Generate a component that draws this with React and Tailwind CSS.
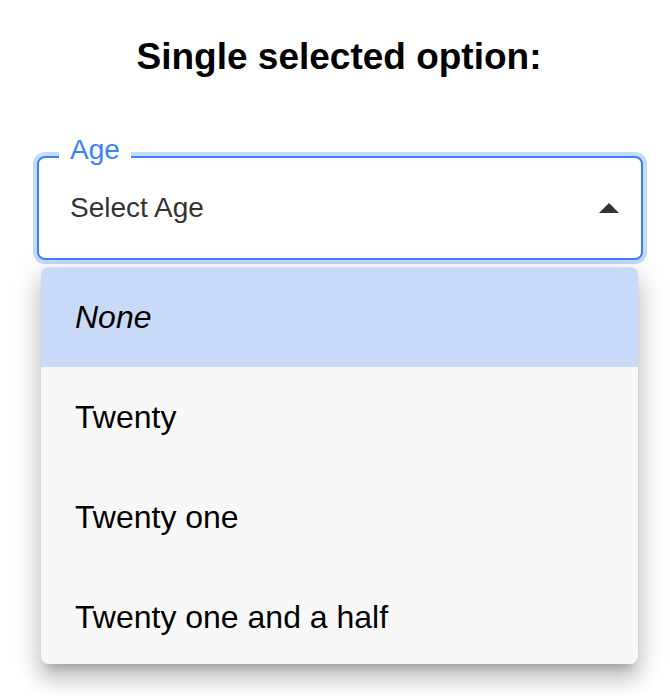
import React from 'react';

const OPTIONS = [
  { label: 'None', italic: true, selected: true },
  { label: 'Twenty' },
  { label: 'Twenty one' },
  { label: 'Twenty one and a half' },
];

const Option = ({ label, italic, selected }) => (
  <li
    className={`flex items-center shrink-0 h-[100px] pl-[34px] text-[32px] text-black ${
      selected ? 'bg-[#c8daf8]' : ''
    } ${italic ? 'italic' : ''}`}
  >
    {label}
  </li>
);

export default function App() {
  return (
    <div className="min-h-[696px] bg-white font-['Liberation_Sans',Arial,sans-serif] pt-[35px]">
      <h3 className="text-center text-[37px] leading-[43px] font-bold text-black pl-[8px]">
        Single selected option:
      </h3>

      <div className="ml-[33px] mt-[74px] w-[614px] rounded-[12px] p-[4px] bg-[#c6dafc]">
        <div className="relative flex items-center h-[104px] rounded-[8px] border-2 border-[#3b82f6] bg-white pl-[31px] pr-[22px]">
          <span className="absolute left-[20px] top-[-22px] px-[11px] bg-white text-[28px] leading-[28px] text-[#3b82f6]">
            Age
          </span>
          <span className="flex-1 text-[28px] text-[#333333]">Select Age</span>
          {/* caret up */}
          <svg width="20" height="10" viewBox="0 0 20 10" className="shrink-0">
            <path d="M0 10 L10 0 L20 10 Z" fill="#333333" />
          </svg>
        </div>
      </div>

      <ul className="flex flex-col ml-[41px] mt-[3px] w-[597px] h-[397px] overflow-hidden rounded-[8px] bg-[#f8f8f8] shadow-[0_10px_10px_-6px_rgba(0,0,0,0.2),0_16px_20px_2px_rgba(0,0,0,0.14),0_6px_28px_4px_rgba(0,0,0,0.12)]">
        {OPTIONS.map((opt) => (
          <Option key={opt.label} {...opt} />
        ))}
      </ul>
    </div>
  );
}
